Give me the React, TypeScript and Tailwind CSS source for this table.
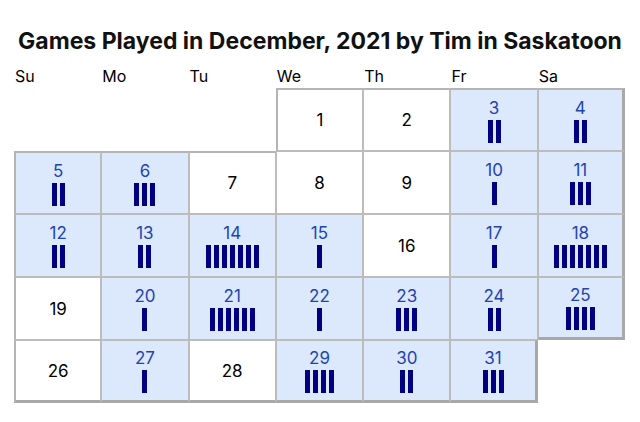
import React from "react";

const counts: Record<number, number> = {
  3: 2, 4: 2, 5: 2, 6: 3, 10: 1, 11: 3, 12: 2, 13: 2, 14: 7, 15: 1, 17: 1, 18: 7,
  20: 1, 21: 6, 22: 1, 23: 3, 24: 2, 25: 4, 27: 1, 29: 4, 30: 2, 31: 3,
};

const days = ["Su", "Mo", "Tu", "We", "Th", "Fr", "Sa"];

function Cell({ day, idx }: { day: number | null; idx: number }) {
  if (day === null) return <div />;
  const row = Math.floor(idx / 7);
  const col = idx % 7;
  const top = row === 0 || (row === 1 && col < 3);
  const left = col === 0 || (row === 0 && col === 3);
  const bottom = row === 4 || (row === 3 && col === 6);
  const right = col === 6 || (row === 4 && col === 5);
  const n = counts[day] || 0;
  const played = n > 0;
  return (
    <div
      className={[
        "flex flex-col items-center justify-center border border-[#bcbcbc]",
        played ? "bg-[#dce8fc]" : "bg-white",
        top ? "border-t-2 border-t-[#b4b4b4]" : "",
        left ? "border-l-2 border-l-[#b4b4b4]" : "",
        bottom ? "border-b-[3px] border-b-[#a8a8a8]" : "",
        right ? "border-r-[3px] border-r-[#a8a8a8]" : "",
      ].join(" ")}
    >
      {played ? (
        <>
          <div className="text-[17px] leading-[20px] text-[#1f44b0]">{day}</div>
          <div className="mt-[2px] flex gap-[3px]">
            {Array.from({ length: n }).map((_, i) => (
              <div key={i} className="h-[23px] w-[5px] bg-[#000080]" />
            ))}
          </div>
        </>
      ) : (
        <div className="text-[17px] leading-[20px] text-black">{day}</div>
      )}
    </div>
  );
}

export default function App() {
  const cells: (number | null)[] = [null, null, null];
  for (let d = 1; d <= 31; d++) cells.push(d);
  while (cells.length < 35) cells.push(null);
  return (
    <div className="h-[422px] w-[640px] overflow-hidden bg-white font-['Inter',sans-serif] text-black">
      <h1 className="pt-[27px] text-center text-[23px] font-bold leading-[28px] text-[#111]">
        Games Played in December, 2021 by Tim in Saskatoon
      </h1>
      <div className="ml-[14px] w-[611px]">
        <div className="mt-[9px] grid h-[24px] grid-cols-7 items-center">
          {days.map((d) => (
            <div key={d} className="pl-[1px] text-[16px] leading-[20px]">
              {d}
            </div>
          ))}
        </div>
        <div className="grid grid-cols-7 auto-rows-[63px]">
          {cells.map((d, i) => (
            <Cell key={i} day={d} idx={i} />
          ))}
        </div>
      </div>
    </div>
  );
}
